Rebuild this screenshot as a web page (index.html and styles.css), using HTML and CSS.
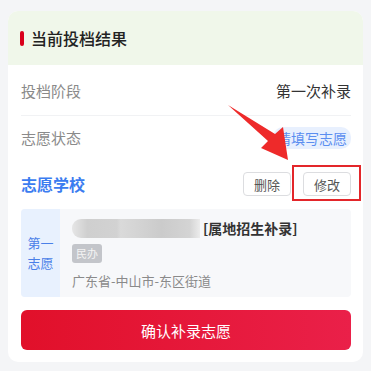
FILE: index.html
```html
<!DOCTYPE html>
<html lang="zh-CN">
<head>
    <meta charset="UTF-8">
    <meta name="viewport" content="width=device-width, initial-scale=1.0">
    <title>当前投档结果</title>
    <link rel="stylesheet" href="styles.css">
</head>
<body>
    <div class="result-card">
        <div class="card-head">
            <span class="head-bar"></span>
            <h1>当前投档结果</h1>
        </div>

        <div class="card-body">
            <div class="info-row divided">
                <span class="label">投档阶段</span>
                <span class="value">第一次补录</span>
            </div>
            <div class="info-row short">
                <span class="label">志愿状态</span>
                <span class="status-badge">请填写志愿</span>
            </div>

            <div class="school-head">
                <h2>志愿学校</h2>
                <div class="actions">
                    <button class="small-btn">删除</button>
                    <button class="small-btn">修改</button>
                </div>
            </div>

            <div class="school-item">
                <div class="order">第一<br>志愿</div>
                <div class="school-info">
                    <div class="school-name">
                        <span class="masked"></span>
                        <span class="name-tail">[属地招生补录]</span>
                    </div>
                    <span class="tag">民办</span>
                    <div class="address">广东省-中山市-东区街道</div>
                </div>
            </div>

            <button class="confirm-btn">确认补录志愿</button>
        </div>

        <!-- annotation overlay -->
        <div class="mark-box"></div>
        <svg class="mark-arrow" width="371" height="371" viewBox="0 0 371 371">
            <polygon points="228,105 275,134 283,127 288,160 261,148 268,141" fill="#ee2a2a"/>
        </svg>
    </div>
</body>
</html>
```

FILE: styles.css
```css
body {
    margin: 0;
    padding: 11px 8px 9px;
    background: #f4f5f7;
    font-family: "Noto Sans CJK SC", "Noto Sans", sans-serif;
}
.result-card {
    background: white;
    border-radius: 10px;
    overflow: visible;
}
.card-head {
    height: 54px;
    display: flex;
    align-items: center;
    padding: 0 12px;
    background: #f0f7ea;
    border-radius: 10px 10px 0 0;
}
.head-bar {
    width: 4px;
    height: 15px;
    background: #d9001b;
    border-radius: 2px;
    margin-right: 7px;
}
.card-head h1 {
    margin: 0;
    font-size: 16px;
    font-weight: 500;
    color: #222;
}
.card-body {
    padding: 0 12px 12px 13px;
}
.info-row {
    height: 50px;
    display: flex;
    align-items: center;
    justify-content: space-between;
    font-size: 15px;
}
.info-row.divided {
    border-bottom: 1px solid #f1f2f4;
}
.info-row.short {
    height: 43px;
}
.label {
    color: #8a8a8a;
}
.value {
    color: #333;
}
.status-badge {
    font-size: 14px;
    color: #5b8ef0;
    background: #e8f0fe;
    padding: 1px 4px;
    border-radius: 10px;
}
.school-head {
    height: 50px;
    display: flex;
    align-items: center;
    justify-content: space-between;
}
.school-head h2 {
    margin: 0;
    font-size: 16px;
    font-weight: bold;
    color: #3b7cf0;
}
.actions {
    display: flex;
    gap: 12px;
}
.small-btn {
    width: 48px;
    height: 24px;
    padding: 0;
    background: white;
    border: 1px solid #dcdde0;
    border-radius: 4px;
    font-family: inherit;
    font-size: 13px;
    color: #555;
}
.school-item {
    display: flex;
    height: 88px;
    background: #f7f8fa;
    border-radius: 4px;
    overflow: hidden;
}
.order {
    width: 39px;
    background: #e8f1fe;
    color: #4a80e8;
    font-size: 13px;
    line-height: 20px;
    display: flex;
    align-items: center;
    justify-content: center;
    text-align: center;
}
.school-info {
    padding: 9px 0 0 12px;
}
.school-name {
    display: flex;
    align-items: center;
    height: 20px;
}
.masked {
    width: 128px;
    height: 19px;
    border-radius: 9px 0 0 9px;
    background: linear-gradient(90deg, #e6e6e6 0%, #cfcfcf 12%, #d2d2d2 35%, #dadada 38%, #cbcbcb 70%, #d4d4d4 92%, #ececec 100%);
}
.name-tail {
    font-size: 14px;
    font-weight: bold;
    color: #333;
    margin-left: 3px;
}
.tag {
    display: inline-block;
    margin-top: 6px;
    width: 30px;
    height: 19px;
    line-height: 19px;
    text-align: center;
    font-size: 11px;
    color: #f4f4f4;
    background: #c3c5ca;
    border-radius: 3px;
}
.address {
    margin-top: 8px;
    font-size: 13px;
    color: #8a8a8a;
}
.confirm-btn {
    display: block;
    width: 100%;
    height: 40px;
    margin-top: 13px;
    border: none;
    border-radius: 6px;
    background: linear-gradient(90deg, #e1102a, #ea2049);
    color: white;
    font-family: inherit;
    font-size: 15px;
}
.mark-box {
    position: absolute;
    left: 292px;
    top: 165px;
    width: 65px;
    height: 32px;
    border: 2px solid #e3262a;
}
.mark-arrow {
    position: absolute;
    left: 0;
    top: 0;
    pointer-events: none;
}
```
